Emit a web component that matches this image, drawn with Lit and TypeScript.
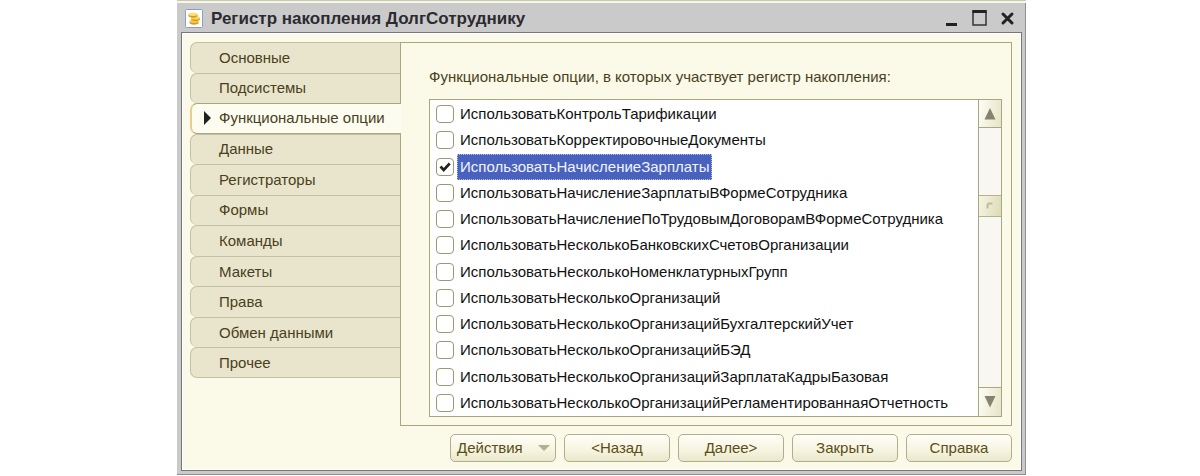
import { LitElement, html, css, svg } from "lit";
import { customElement, state } from "lit/decorators.js";
import { classMap } from "lit/directives/class-map.js";

const TABS = [
  "Основные",
  "Подсистемы",
  "Функциональные опции",
  "Данные",
  "Регистраторы",
  "Формы",
  "Команды",
  "Макеты",
  "Права",
  "Обмен данными",
  "Прочее",
];

const OPTIONS = [
  "ИспользоватьКонтрольТарификации",
  "ИспользоватьКорректировочныеДокументы",
  "ИспользоватьНачислениеЗарплаты",
  "ИспользоватьНачислениеЗарплатыВФормеСотрудника",
  "ИспользоватьНачислениеПоТрудовымДоговорамВФормеСотрудника",
  "ИспользоватьНесколькоБанковскихСчетовОрганизации",
  "ИспользоватьНесколькоНоменклатурныхГрупп",
  "ИспользоватьНесколькоОрганизаций",
  "ИспользоватьНесколькоОрганизацийБухгалтерскийУчет",
  "ИспользоватьНесколькоОрганизацийБЭД",
  "ИспользоватьНесколькоОрганизацийЗарплатаКадрыБазовая",
  "ИспользоватьНесколькоОрганизацийРегламентированнаяОтчетность",
];

const coins = svg`
  <rect x="0.5" y="0.5" width="17" height="18" rx="1" fill="#fff" stroke="#8aa0bc"/>
  <path d="M4.500 12.500v1.300c0 1 2 1.900 4.600 1.900s4.600-.9 4.600-1.900v-1.300z" fill="#d69a1e"/>
  <ellipse cx="9.100" cy="12.300" rx="4.600" ry="1.700" fill="#f3cc4c"/>
  <path d="M6.200 9v1.300c0 1 2 1.900 4.400 1.900s4.400-.9 4.400-1.900V9z" fill="#d69a1e"/>
  <ellipse cx="10.600" cy="8.900" rx="4.400" ry="1.700" fill="#f6d562"/>
  <path d="M3.400 5.500v1.300c0 1 2 1.900 4.600 1.900s4.600-.9 4.600-1.900V5.500z" fill="#d69a1e"/>
  <ellipse cx="8" cy="5.300" rx="4.600" ry="1.700" fill="#fbe07a"/>`;

@customElement("app-root")
export class AppRoot extends LitElement {
  @state() private tab = 2;
  @state() private current = 2;

  static styles = css`
    :host {
      display: block;
      font: 15px/20px "Liberation Sans", Arial, sans-serif;
      color: #4a3f1c;
      background: #fff;
    }
    * {
      box-sizing: border-box;
    }
    button {
      font: inherit;
      color: inherit;
      margin: 0;
      padding: 0;
      border: 0;
      background: none;
    }
    .desk {
      padding: 0 174px 0 177px;
    }
    .strip {
      height: 3px;
      border-top: 1px solid #c9c9ad;
      background: #f6f6ea;
    }
    .window {
      border: solid #8f8f90;
      border-width: 0 1px 1px 0;
      background: #cbcacb;
      padding: 0 3px 3px 4px;
    }
    .title {
      display: flex;
      align-items: center;
      height: 29px;
      padding: 1px 6px 0 4px;
    }
    .title h1 {
      flex: 1;
      margin: 0 0 0 8px;
      padding-top: 2px;
      font-size: 17px;
      line-height: 20px;
      font-weight: bold;
      color: #2b2b30;
      white-space: nowrap;
    }
    .title svg {
      display: block;
    }
    .winbtns {
      display: flex;
      gap: 12px;
    }
    .body {
      border: 1px solid #77777a;
      outline: 1px solid #fff;
      outline-offset: -2px;
      background: #fbfae9;
      padding: 9px 9px 8px 8px;
    }
    .cols {
      display: grid;
      grid-template-columns: 210px 1fr;
      align-items: start;
    }
    .tabs {
      display: grid;
      grid-auto-rows: 1fr;
      height: 336px;
    }
    .tab {
      display: flex;
      align-items: center;
      text-align: left;
      padding-left: 28px;
      border: 1px solid #c3c1a1;
      border-right: 0;
      border-bottom-width: 0;
      border-radius: 7px 0 0 7px;
      background: #e9e5cc;
      white-space: nowrap;
    }
    .tab:last-child {
      border-bottom-width: 1px;
    }
    .tab.active {
      position: relative;
      background: #fdfcf0;
      margin-right: -1px;
      padding-left: 12px;
      gap: 8px;
      border-color: #a9a77f;
      border-left: 2px solid #e8cd8c;
      border-bottom-width: 1px;
    }
    .panel {
      border: 1px solid #a9a77f;
      padding: 24px 9px 8px 28px;
    }
    .caption {
      margin: 0 0 12px;
    }
    .list {
      display: grid;
      grid-template-columns: 1fr 23px;
      height: 318px;
      border: 1px solid #a9a77f;
      background: #fff;
    }
    .rows {
      display: grid;
      grid-auto-rows: 1fr;
      margin: 0;
      padding: 1px 0 0;
      list-style: none;
      color: #111;
      min-width: 0;
    }
    .rows label {
      display: flex;
      align-items: center;
      gap: 3px;
      height: 100%;
      padding-left: 6px;
      white-space: nowrap;
    }
    .rows input {
      appearance: none;
      flex: none;
      width: 18px;
      height: 18px;
      margin: 0;
      border: 1px solid #9a9879;
      border-radius: 4px;
      background: #fff;
    }
    .rows input:checked {
      background: #fff
        url("data:image/svg+xml,%3Csvg xmlns='http://www.w3.org/2000/svg' width='16' height='16'%3E%3Cpath d='M3.500 7.500l3.200 3.500 6-6.500' fill='none' stroke='%23222' stroke-width='2.600'/%3E%3C/svg%3E")
        center no-repeat;
    }
    .name {
      padding: 2px;
      border: 1px dotted transparent;
    }
    .name.current {
      color: #f2f4ff;
      background: #4862bd;
      border-color: #b9c3ea;
    }
    .scroll {
      display: grid;
      grid-template-rows: 28px 67px 22px 1fr 29px;
      border-left: 1px solid #a9a77f;
      background: #f8f7f2;
    }
    .scroll button {
      display: grid;
      place-items: center;
      background: linear-gradient(100deg, #fdfdf6, #e6e4c6);
    }
    .scroll .up {
      border-bottom: 1px solid #a9a77f;
    }
    .scroll .down {
      border-top: 1px solid #a9a77f;
    }
    .thumb {
      display: grid;
      place-items: center;
      border: solid #b5b38e;
      border-width: 1px 0;
      background: linear-gradient(100deg, #f6f5e2, #dedbb6);
    }
    .actions {
      display: flex;
      justify-content: flex-end;
      gap: 8px;
      margin-top: 8px;
    }
    .actions button {
      width: 106px;
      height: 28px;
      border: 1px solid #b1af8a;
      border-radius: 5px;
      background: linear-gradient(#fefef8, #f5f4e0 60%, #e9e7cb);
      color: #5c4d14;
    }
    .actions .menu {
      display: flex;
      align-items: center;
      justify-content: space-between;
      padding: 0 5px 0 6px;
    }
  `;

  render() {
    return html`
      <div class="desk">
        <div class="strip"></div>
        <section class="window">
          <header class="title">
            <svg width="18" height="19" viewBox="0 0 18 19">${coins}</svg>
            <h1>Регистр накопления ДолгСотруднику</h1>
            <div class="winbtns">
              <button aria-label="Свернуть">
                <svg width="16" height="16"><path d="M2 14.500h11" stroke="#222" stroke-width="3" /></svg>
              </button>
              <button aria-label="Развернуть">
                <svg width="16" height="16">
                  <path d="M1 2v13h13V2" fill="none" stroke="#333" stroke-width="1.500" />
                  <path d="M.2 1.500h14.600" stroke="#222" stroke-width="3" />
                </svg>
              </button>
              <button aria-label="Закрыть">
                <svg width="16" height="16"><path d="M3 4l9 9M12 4L3 13" stroke="#222" stroke-width="3" stroke-linecap="round" /></svg>
              </button>
            </div>
          </header>
          <div class="body">
            <div class="cols">
              <nav class="tabs">
                ${TABS.map(
                  (t, i) => html`<button
                    class=${classMap({ tab: true, active: i === this.tab })}
                    @click=${() => (this.tab = i)}
                  >
                    ${i === this.tab
                      ? html`<svg width="7" height="14"><path d="M0 0v14l7-7z" fill="#222" /></svg>`
                      : ""}<span>${t}</span>
                  </button>`
                )}
              </nav>
              <div class="panel">
                <p class="caption">Функциональные опции, в которых участвует регистр накопления:</p>
                <div class="list">
                  <ul class="rows">
                    ${OPTIONS.map(
                      (o, i) => html`<li>
                        <label>
                          <input type="checkbox" ?checked=${i === 2} @change=${() => (this.current = i)} />
                          <span class=${classMap({ name: true, current: i === this.current })}>${o}</span>
                        </label>
                      </li>`
                    )}
                  </ul>
                  <div class="scroll">
                    <button class="up" aria-label="Вверх">
                      <svg width="12" height="12"><path d="M6 0l5.500 11.500H.5z" fill="#85836f" /></svg>
                    </button>
                    <span></span>
                    <div class="thumb">
                      <svg width="8" height="8"><path d="M1.500 6.500v-3q0-2 2-2h3" fill="none" stroke="#bdbb9b" stroke-width="2" /></svg>
                    </div>
                    <span></span>
                    <button class="down" aria-label="Вниз">
                      <svg width="12" height="12"><path d="M6 11.500L11.500 0H.5z" fill="#85836f" /></svg>
                    </button>
                  </div>
                </div>
              </div>
            </div>
            <footer class="actions">
              <button class="menu">
                Действия
                <svg width="12" height="6"><path d="M0 0h12L6 6z" fill="#b3b08f" /></svg>
              </button>
              <button>&lt;Назад</button>
              <button>Далее&gt;</button>
              <button>Закрыть</button>
              <button>Справка</button>
            </footer>
          </div>
        </section>
      </div>
    `;
  }
}
